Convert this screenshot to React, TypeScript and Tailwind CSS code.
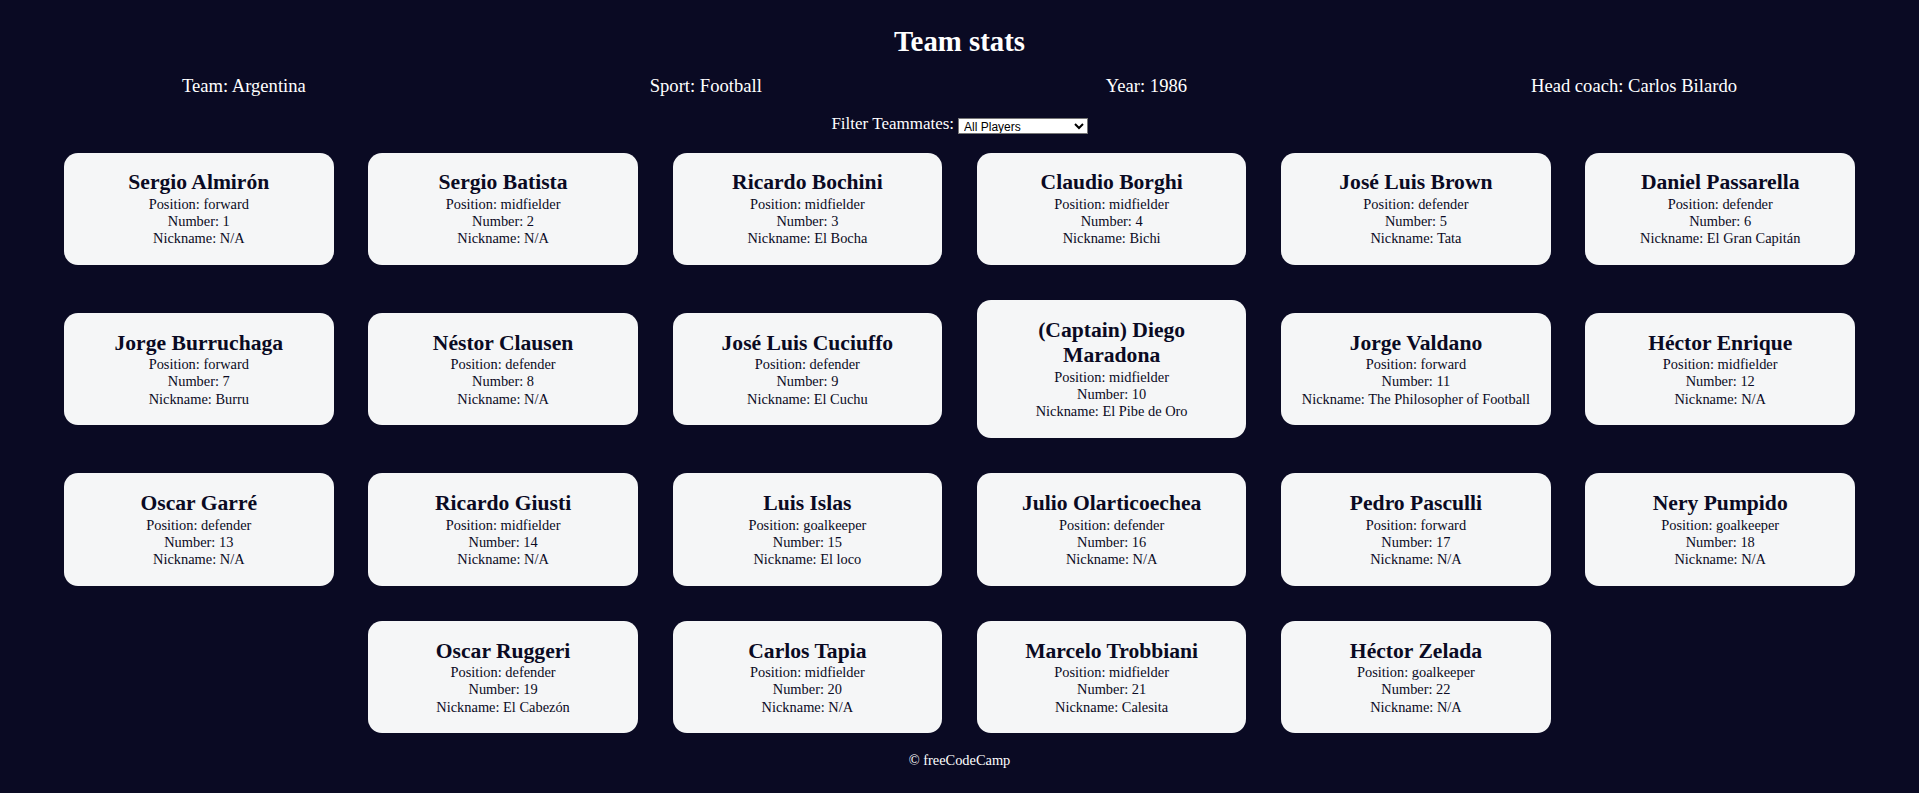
import React from "react";

type Player = {
  name: string;
  position: string;
  number: number;
  nickname: string | null;
  isCaptain?: boolean;
};

const players: Player[] = [
  { name: "Sergio Almirón", position: "forward", number: 1, nickname: null },
  { name: "Sergio Batista", position: "midfielder", number: 2, nickname: null },
  { name: "Ricardo Bochini", position: "midfielder", number: 3, nickname: "El Bocha" },
  { name: "Claudio Borghi", position: "midfielder", number: 4, nickname: "Bichi" },
  { name: "José Luis Brown", position: "defender", number: 5, nickname: "Tata" },
  { name: "Daniel Passarella", position: "defender", number: 6, nickname: "El Gran Capitán" },
  { name: "Jorge Burruchaga", position: "forward", number: 7, nickname: "Burru" },
  { name: "Néstor Clausen", position: "defender", number: 8, nickname: null },
  { name: "José Luis Cuciuffo", position: "defender", number: 9, nickname: "El Cuchu" },
  { name: "Diego Maradona", position: "midfielder", number: 10, nickname: "El Pibe de Oro", isCaptain: true },
  { name: "Jorge Valdano", position: "forward", number: 11, nickname: "The Philosopher of Football" },
  { name: "Héctor Enrique", position: "midfielder", number: 12, nickname: null },
  { name: "Oscar Garré", position: "defender", number: 13, nickname: null },
  { name: "Ricardo Giusti", position: "midfielder", number: 14, nickname: null },
  { name: "Luis Islas", position: "goalkeeper", number: 15, nickname: "El loco" },
  { name: "Julio Olarticoechea", position: "defender", number: 16, nickname: null },
  { name: "Pedro Pasculli", position: "forward", number: 17, nickname: null },
  { name: "Nery Pumpido", position: "goalkeeper", number: 18, nickname: null },
  { name: "Oscar Ruggeri", position: "defender", number: 19, nickname: "El Cabezón" },
  { name: "Carlos Tapia", position: "midfielder", number: 20, nickname: null },
  { name: "Marcelo Trobbiani", position: "midfielder", number: 21, nickname: "Calesita" },
  { name: "Héctor Zelada", position: "goalkeeper", number: 22, nickname: null },
];

const PlayerCard: React.FC<{ player: Player }> = ({ player }) => (
  <div className="w-[269.5px] mx-[17.4px] my-[17.6px] p-[17.6px] rounded-[14px] bg-[#f5f6f7] text-[#0a0a23] text-center">
    <h2 className="text-[21.6px] leading-[25.6px] font-bold">
      {player.isCaptain ? "(Captain) " : ""}
      {player.name}
    </h2>
    <p className="text-[14.4px] leading-[17.2px]">Position: {player.position}</p>
    <p className="text-[14.4px] leading-[17.2px]">Number: {player.number}</p>
    <p className="text-[14.4px] leading-[17.2px]">Nickname: {player.nickname ?? "N/A"}</p>
  </div>
);

const App: React.FC = () => {
  return (
    <div className="min-h-screen bg-[#0a0a23] text-white font-['Liberation_Serif','Times_New_Roman',serif] pb-[25px]">
      <h1 className="pt-[24px] text-center text-[28.8px] leading-[34px] font-bold">Team stats</h1>

      <div className="mt-[7px] flex flex-wrap justify-around p-[10px] text-[18.6px] leading-[22px]">
        <p>Team: Argentina</p>
        <p>Sport: Football</p>
        <p>Year: 1986</p>
        <p>Head coach: Carlos Bilardo</p>
      </div>

      <div className="mt-[7px] flex justify-center items-start">
        <label htmlFor="players" className="text-[17px] leading-[20px]">
          Filter Teammates:
        </label>
        <select
          id="players"
          defaultValue="all"
          className="ml-[4px] mt-[4px] h-[16px] w-[129.5px] border border-[#767676] bg-white text-black text-[12px] leading-none font-['Liberation_Sans',Arial,sans-serif] py-0 pl-[1px]"
        >
          <option value="all">All Players</option>
          <option value="nickname">Nicknames</option>
          <option value="forward">Position Forward</option>
          <option value="midfielder">Position Midfielder</option>
          <option value="defender">Position Defender</option>
          <option value="goalkeeper">Position Goalkeeper</option>
        </select>
      </div>

      <div className="pt-[1px] flex flex-wrap justify-center items-center">
        {players.map((player) => (
          <PlayerCard key={player.number} player={player} />
        ))}
      </div>

      <footer className="mt-[1px] text-center text-[14.4px] leading-[16.5px]">© freeCodeCamp</footer>
    </div>
  );
};

export default App;
